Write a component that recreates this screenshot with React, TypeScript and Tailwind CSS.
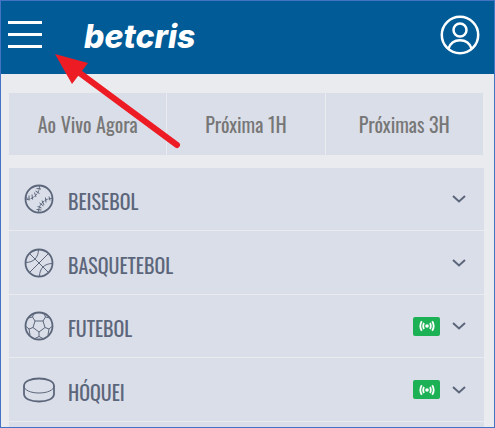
import type { ReactNode } from 'react';

const BaseballIcon = () => (
  <svg viewBox="0 0 30 30" className="h-[30px] w-[30px]" fill="none" stroke="currentColor">
    <circle cx="15" cy="15" r="13.5" strokeWidth="1.8" />
    <path d="M15.5 2c0 7.500-6 13.500-13.500 13.500M28 14.500c-7.500 0-13.500 6-13.500 13.500" strokeDasharray="3.500 .8" />
    <path d="M12.500 4.500l4.500.5M11.500 7l4 2.500M10.500 8.500l1.500 4.500M8 10.500l.5 5M5 11.500l0 5M2.500 13l1 3M25 12.500l1 4M21.500 13.500l.5 5M18 16.500l2 4.500M15.500 19l4 3M13.500 22.500l4 1.500M12.500 25.500l5 .5" />
  </svg>
);

const BasketballIcon = () => (
  <svg viewBox="0 0 30 30" className="h-[30px] w-[30px]" fill="none" stroke="currentColor">
    <circle cx="15" cy="15" r="13.5" strokeWidth="1.8" />
    <path d="M5.500 5.500l19 19M24.500 5.500l-19 19M14.500 1.500c0 8-5 13-13 13M28.500 15.500c-8 0-13 5-13 13" />
  </svg>
);

const SoccerIcon = () => (
  <svg viewBox="0 0 30 30" className="h-[30px] w-[30px]" fill="none" stroke="currentColor">
    <circle cx="15" cy="15" r="13.5" strokeWidth="1.8" />
    <path d="M11 10h8l2 6.500-6 4.500-6-4.500zM11 10L8.500 6 10 2.500M8.500 6L4 7M19 10l2.500-4L20 2.500M21.500 6l4.500 1M9 16.500L5 18l-3.500-3M5 18l1 6M21 16.500l4 1.500 3.500-3M25 18l-1 6M15 21v4.500M10 28l5-2.500 5 2.500" />
  </svg>
);

const PuckIcon = () => (
  <svg viewBox="0 0 32 26" className="h-[26px] w-8" fill="none" stroke="currentColor" strokeWidth="1.8">
    <path d="M1 9C1 4.500 7.500 1.500 16 1.500S31 4.500 31 9v8c0 4.500-6.500 7.500-15 7.500S1 21.500 1 17z" />
    <path d="M1 9c0 4 6.500 7 15 7s15-3 15-7" strokeWidth="1" />
  </svg>
);

const LiveBadge = () => (
  <span className="flex h-[19px] w-[27px] items-center justify-center rounded-xs bg-[#1db155] text-white">
    <svg viewBox="0 0 16 12" className="h-3 w-4" fill="none" stroke="currentColor" strokeWidth="1.8" role="img" aria-label="Ao vivo">
      <circle cx="8" cy="6" r="1.8" fill="currentColor" stroke="none" />
      <path d="M5 3q-1.600 3 0 6M11 3q1.600 3 0 6M2.800 1.200q-3 4.800 0 9.600M13.200 1.200q3 4.800 0 9.600" />
    </svg>
  </span>
);

const ChevronIcon = () => (
  <svg viewBox="0 0 14 8" className="h-2 w-3.5" fill="none" stroke="currentColor" strokeWidth="2">
    <path d="M1 1l6 5.500L13 1" />
  </svg>
);

const Header = () => (
  <header className="flex h-[73px] shrink-0 items-center bg-[#005b97] pr-3.5 pb-1.5 pl-[7px] text-white">
    <button type="button" aria-label="Menu" className="flex w-[34px] flex-col gap-[9px]">
      <span className="h-[3px] w-full bg-white" />
      <span className="h-[3px] w-full bg-white" />
      <span className="h-[3px] w-full bg-white" />
    </button>
    <a href="#" className="relative mt-1 ml-[42px] font-['Inter',sans-serif] text-[32px] leading-9 font-extrabold italic">
      betcris
      <svg viewBox="0 0 12 12" className="absolute top-1 right-3.5 h-3 w-3" fill="none" stroke="#005b97" aria-hidden="true">
        <path d="M2 7q5 0 8-4" />
      </svg>
    </a>
    <button type="button" aria-label="Minha conta" className="ml-auto">
      <svg viewBox="0 0 40 40" className="h-10 w-10" fill="none" stroke="currentColor" strokeWidth="2.5">
        <circle cx="20" cy="20" r="18.2" />
        <circle cx="20" cy="15" r="6.5" />
        <path d="M8.500 33.500c2-5.500 6-8.200 11.500-8.200s9.500 2.700 11.500 8.200" />
      </svg>
    </button>
  </header>
);

const tabs = ['Ao Vivo Agora', 'Próxima 1H', 'Próximas 3H'];

const sports: { name: string; icon: ReactNode; live?: boolean }[] = [
  { name: 'BEISEBOL', icon: <BaseballIcon /> },
  { name: 'BASQUETEBOL', icon: <BasketballIcon /> },
  { name: 'FUTEBOL', icon: <SoccerIcon />, live: true },
  { name: 'HÓQUEI', icon: <PuckIcon />, live: true },
];

const App = () => (
  <div className="relative flex h-screen flex-col overflow-hidden border border-[#4472c4] bg-[#eaebef] font-['Oswald','Liberation_Sans_Narrow','Liberation_Sans',sans-serif]">
    <Header />
    <main className="pt-[19px] pr-2.5 pl-2">
      <nav className="grid grid-cols-3 gap-px pr-px">
        {tabs.map((tab) => (
          <button key={tab} type="button" className="h-[62px] bg-[#dadee8] text-xl whitespace-nowrap text-[#777777]">
            {tab}
          </button>
        ))}
      </nav>

      <ul className="mt-[13px] text-[#5c667b]">
        {sports.map(({ name, icon, live }) => (
          <li key={name} className="border-b border-[#eaebef] bg-[#dadee8] odd:h-[63px] even:h-16">
            <button type="button" className="flex h-full w-full items-center pr-[18px] pl-3.5">
              <span className="flex w-8 justify-center">{icon}</span>
              <span className="ml-[13px] pt-1 text-xl">{name}</span>
              <span className="ml-auto flex items-center gap-3">
                {live && <LiveBadge />}
                <ChevronIcon />
              </span>
            </button>
          </li>
        ))}
        <li className="h-16 bg-[#dadee8]" />
      </ul>
    </main>

    <svg viewBox="0 0 128 96" className="pointer-events-none absolute top-[53px] left-[54px] h-24 w-32" aria-hidden="true">
      <path d="M22 17l100 74" stroke="#ed1c24" strokeWidth="6" strokeLinecap="round" />
      <path d="M0 0l33 9-16 21z" fill="#ed1c24" />
    </svg>
  </div>
);

export default App;
